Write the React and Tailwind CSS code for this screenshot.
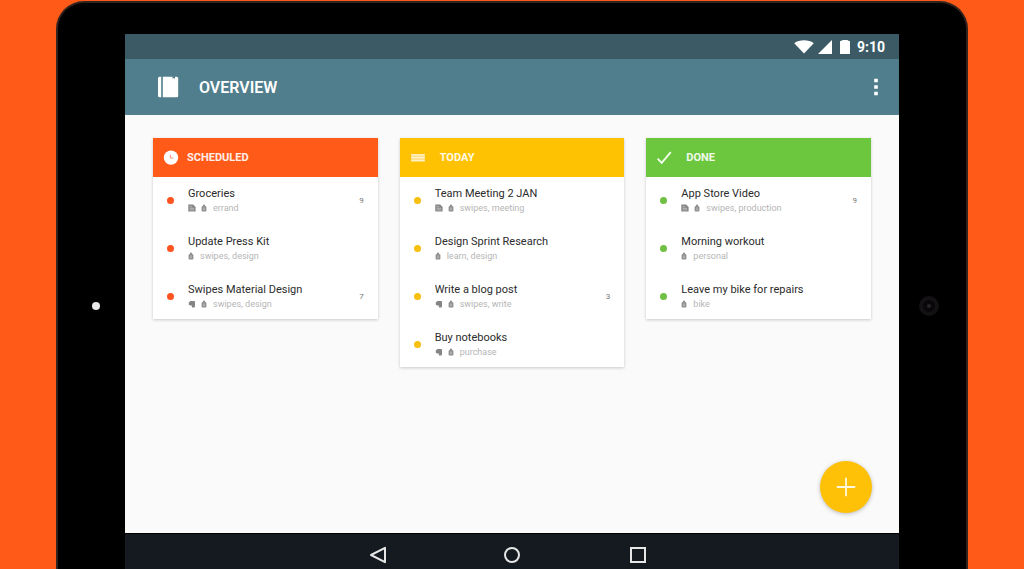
import clsx from 'clsx'

const lists = [
  {
    title: 'SCHEDULED',
    header: 'bg-[#ff5a17]',
    dot: 'bg-[#ff5320]',
    heading: 'pl-2',
    Icon: ClockIcon,
    tasks: [
      { title: 'Groceries', source: 'note', tags: 'errand', count: 9 },
      { title: 'Update Press Kit', tags: 'swipes, design' },
      { title: 'Swipes Material Design', source: 'evernote', tags: 'swipes, design', count: 7 },
    ],
  },
  {
    title: 'TODAY',
    header: 'bg-[#ffc203]',
    dot: 'bg-[#f5c010]',
    heading: 'pl-3.5',
    Icon: LinesIcon,
    tasks: [
      { title: 'Team Meeting 2 JAN', source: 'note', tags: 'swipes, meeting' },
      { title: 'Design Sprint Research', tags: 'learn, design' },
      { title: 'Write a blog post', source: 'evernote', tags: 'swipes, write', count: 3 },
      { title: 'Buy notebooks', source: 'evernote', tags: 'purchase' },
    ],
  },
  {
    title: 'DONE',
    header: 'bg-[#6cc63e]',
    dot: 'bg-[#6fc044]',
    heading: 'pl-3.5',
    Icon: CheckIcon,
    tasks: [
      { title: 'App Store Video', source: 'note', tags: 'swipes, production', count: 9 },
      { title: 'Morning workout', tags: 'personal' },
      { title: 'Leave my bike for repairs', tags: 'bike' },
    ],
  },
]

function ClockIcon() {
  return (
    <svg viewBox="0 0 16 16" className="h-4 w-4" aria-hidden="true">
      <circle cx="8" cy="7.6" r="7.2" fill="#fff" />
      <path d="M7.4 5v3h3" fill="none" stroke="#ff9a70" strokeWidth="1.1" />
    </svg>
  )
}

function LinesIcon() {
  return (
    <svg viewBox="0 0 16 16" className="h-4 w-4" aria-hidden="true">
      <path d="M1.2 4h13.6v7.4H1.2z" fill="#ffe08a" />
      <path d="M1.2 4.8h13.6M1.2 7.7h13.6M1.2 10.6h13.6" stroke="#fff2c8" strokeWidth="1.3" />
    </svg>
  )
}

function CheckIcon() {
  return (
    <svg viewBox="0 0 16 16" className="h-4 w-4" aria-hidden="true">
      <path d="M1.6 8.6l4.1 4.2L14.8 2.2" fill="none" stroke="#f4fff0" strokeWidth="1.8" />
    </svg>
  )
}

function NoteIcon() {
  return (
    <svg viewBox="0 0 8 8" className="h-2 w-2" aria-hidden="true">
      <path d="M.3 .6h4.9l2.4 2.5v4.4H.3z" fill="#858585" />
      <path d="M1.6 2.7h2.6M1.6 4.3h4.6M1.6 5.9h4.6" stroke="#dcdcdc" strokeWidth=".6" />
    </svg>
  )
}

function EvernoteIcon() {
  return (
    <svg viewBox="0 0 8 8" className="h-2 w-2" aria-hidden="true">
      <path
        d="M2.4 1h3.4c.8 0 1.2.4 1.2 1.200v3.800c0 1-.5 1.500-1.300 1.500H4.600c-.6 0-.8-.4-.8-1V5.400H2C1.200 5.400.8 5 .8 4.200V2.600z"
        fill="#858585"
      />
    </svg>
  )
}

function TagIcon() {
  return (
    <svg viewBox="0 0 6 8" className="h-2 w-1.5" aria-hidden="true">
      <path
        d="M2 1.8V1.200a.8.8 0 0 1 .8-.8h.4a.8.8 0 0 1 .8.8v.6l1.400.9v4a.8.8 0 0 1-.8.800H1.400a.8.8 0 0 1-.8-.8v-4z"
        fill="#909090"
      />
      <path d="M2 4.100h2M2 5.600h2" stroke="#d0d0d0" strokeWidth=".6" />
    </svg>
  )
}

function StatusBar() {
  return (
    <div className="flex h-[25px] items-center justify-end bg-[#3c5a65] pr-3.5 text-white">
      <svg viewBox="0 0 20 14" className="h-3.5 w-5" aria-hidden="true">
        <path d="M10 13.6L.2 3.2C5.500-.6 14.500-.6 19.800 3.2z" fill="#fff" />
      </svg>
      <svg viewBox="0 0 14 14" className="ml-1 h-3.5 w-3.5" aria-hidden="true">
        <path d="M14 0v14H0z" fill="#fff" />
      </svg>
      <svg viewBox="0 0 10 14" className="ml-2 h-3.5 w-2.5" aria-hidden="true">
        <path d="M2.500 0h5l.6.8H9a1 1 0 0 1 1 1V13.500a.5.5 0 0 1-.5.500H.5a.5.5 0 0 1-.5-.5V1.800a1 1 0 0 1 1-1h.9z" fill="#fff" />
      </svg>
      <span className="ml-[7px] text-sm font-bold">9:10</span>
    </div>
  )
}

function AppBar() {
  return (
    <header className="flex h-14 items-center bg-[#517e8c] pr-3.5 pl-8 text-white">
      <svg viewBox="0 0 22 22" className="h-[22px] w-[22px]" aria-hidden="true">
        <path d="M2.500 .8h1.700v20.400H2.500A1.500 1.500 0 0 1 1 19.700V2.300A1.500 1.500 0 0 1 2.500.8z" fill="#fff" />
        <path
          d="M5.800 .8H15.600v2l1.200-.8 1.200.8v-2h1.700a1.500 1.500 0 0 1 1.500 1.500v17.400a1.500 1.500 0 0 1-1.500 1.500H5.800z"
          fill="#fff"
        />
      </svg>
      <h1 className="ml-5 pt-0.5 text-base font-semibold">OVERVIEW</h1>
      <button type="button" aria-label="More options" className="ml-auto flex h-6 w-[18px] items-center justify-center">
        <svg viewBox="0 0 4 18" className="h-[18px] w-1" aria-hidden="true">
          <path d="M.2 .7h3.600v3.600H.2zM.2 7.200h3.600v3.600H.2zM.2 13.700h3.600v3.600H.2z" fill="#fff" />
        </svg>
      </button>
    </header>
  )
}

function TaskRow({ task, dot }) {
  return (
    <li className="flex h-[46px] items-center px-3.5">
      <span className={clsx('h-[7px] w-[7px] rounded-full', dot)} />
      <div className="ml-3.5 flex-1">
        <p className="text-[11px] leading-4 text-[#2b2b2b]">{task.title}</p>
        <div className="flex h-3 items-center">
          {task.source === 'note' && <NoteIcon />}
          {task.source === 'evernote' && <EvernoteIcon />}
          <span className={clsx('flex', task.source && 'ml-[5px]')}>
            <TagIcon />
          </span>
          <span className="ml-1.5 text-[9px] leading-3 text-[#b5b5b5]">{task.tags}</span>
        </div>
      </div>
      {task.count && <span className="pt-px text-[8px] text-[#777]">{task.count}</span>}
    </li>
  )
}

function TaskList({ list }) {
  const { Icon } = list
  return (
    <section className="min-w-0 flex-1 bg-white shadow-[0_1px_3px_rgba(0,0,0,0.2)]">
      <div className={clsx('flex h-[39px] items-center pl-2.5', list.header)}>
        <Icon />
        <h2 className={clsx('pt-0.5 text-[11px] font-bold text-white/90', list.heading)}>{list.title}</h2>
      </div>
      <ul className="flex flex-col gap-0.5">
        {list.tasks.map((task) => (
          <TaskRow key={task.title} task={task} dot={list.dot} />
        ))}
      </ul>
    </section>
  )
}

function NavBar() {
  const button = 'flex h-5 w-5 items-center justify-center'
  return (
    <nav className="flex h-9 items-center justify-center gap-[106px] border-t border-black bg-[#141a20] pt-1.5 pr-2">
      <button type="button" aria-label="Back" className={button}>
        <svg viewBox="0 0 18 18" className="h-[18px] w-[18px]" aria-hidden="true">
          <path d="M16 1.800v14.400L2 9z" fill="none" stroke="#e6e6e6" strokeWidth="2" strokeLinejoin="round" />
        </svg>
      </button>
      <button type="button" aria-label="Home" className={clsx(button, 'ml-2')}>
        <svg viewBox="0 0 18 18" className="h-[18px] w-[18px]" aria-hidden="true">
          <circle cx="9" cy="9" r="7" fill="none" stroke="#e6e6e6" strokeWidth="2" />
        </svg>
      </button>
      <button type="button" aria-label="Recent apps" className={button}>
        <svg viewBox="0 0 18 18" className="h-[18px] w-[18px]" aria-hidden="true">
          <rect x="2" y="2" width="14" height="14" fill="none" stroke="#e6e6e6" strokeWidth="2" />
        </svg>
      </button>
    </nav>
  )
}

export default function App() {
  return (
    <div className="flex h-screen overflow-hidden bg-[#ff5a17] px-14 pt-px font-['Roboto',sans-serif]">
      <div className="flex flex-1 rounded-t-[28px] border-2 border-b-0 border-[#33231e] bg-black">
        <div className="flex w-[67px] items-center justify-center pt-10 pl-2">
          <span className="h-2 w-2 rounded-full bg-[#e8e8e8]" />
        </div>
        <div className="flex min-w-0 flex-1 flex-col pt-[31px]">
          <StatusBar />
          <AppBar />
          <main className="relative flex flex-1 items-start gap-[22px] bg-[#fafafa] px-7 pt-[23px]">
            {lists.map((list) => (
              <TaskList key={list.title} list={list} />
            ))}
            <button
              type="button"
              aria-label="Add task"
              className="absolute right-[27px] bottom-5 flex h-[52px] w-[52px] items-center justify-center rounded-full bg-[#ffc107] shadow-[0_1px_4px_rgba(0,0,0,0.25)]"
            >
              <svg viewBox="0 0 20 20" className="h-5 w-5" aria-hidden="true">
                <path d="M10 .8v18.400M.8 10h18.400" stroke="#fff8dc" strokeWidth="1.800" />
              </svg>
            </button>
          </main>
          <NavBar />
        </div>
        <div className="flex w-[67px] items-center justify-center pt-10 pr-2">
          <span className="flex h-5 w-5 items-center justify-center rounded-full border-4 border-[#131113] bg-[#09070a]">
            <span className="h-1 w-1 rounded-full bg-[#2a2527]" />
          </span>
        </div>
      </div>
    </div>
  )
}
